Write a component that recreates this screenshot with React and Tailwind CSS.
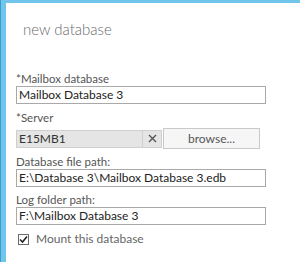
export default function App() {
  const font = { fontFamily: 'Lato, "Open Sans", sans-serif' };

  return (
    <div className="w-[300px] h-[262px] bg-[#3d9bd0] pl-px overflow-hidden" style={font}>
      <div className="h-full bg-white border-l-[5px] border-t-[3px] border-[#6fc6ea]">
        <div className="pl-[17px] pt-[16px] h-[40px] text-[15px] leading-[20px] font-light text-[#6b6b6b]">
          new database
        </div>

        <div className="pl-[10px] pt-[29px] w-[260px]">
          <Field label="*Mailbox database" value="Mailbox Database 3" />

          <div className="mt-[7px] h-[14px] text-[11.5px] leading-[14px] text-[#555]">*Server</div>
          <div className="mt-[3px] flex items-center h-[21px]">
            <div className="flex items-center w-[146px] h-[18px] bg-[#e5e5e5] border border-[#cfcfcf]">
              <div className="flex-1 pl-[2px] text-[12px] leading-[16px] text-[#333]">E15MB1</div>
              <div className="w-[19px] h-full border-l border-[#cfcfcf] flex items-center justify-center">
                <svg width="9" height="9" viewBox="0 0 9 9">
                  <path d="M1 1 L8 8 M8 1 L1 8" stroke="#555" strokeWidth="1.4" />
                </svg>
              </div>
            </div>
            <button className="ml-[1px] w-[97px] h-[21px] bg-[#f6f6f6] border border-[#c9c9c9] text-[12px] leading-[18px] text-[#555]">
              browse...
            </button>
          </div>

          <div className="mt-[6px]">
            <Field label="Database file path:" value="E:\Database 3\Mailbox Database 3.edb" />
          </div>
          <div className="mt-[6px]">
            <Field label="Log folder path:" value="F:\Mailbox Database 3" />
          </div>

          <div className="mt-[7px] ml-[2px] flex items-center gap-[7px]">
            <div className="w-[11px] h-[11px] border border-[#6a6a6a] bg-white flex items-center justify-center">
              <svg width="9" height="9" viewBox="0 0 9 9">
                <path d="M1 4.5 L3.5 7 L8 1.5" stroke="#222" strokeWidth="1.6" fill="none" />
              </svg>
            </div>
            <span className="text-[12px] leading-[14px] text-[#666]">Mount this database</span>
          </div>
        </div>
      </div>
    </div>
  );
}

function Field({ label, value }) {
  return (
    <div>
      <div className="h-[14px] text-[11.5px] leading-[14px] text-[#555]">{label}</div>
      <div className="w-[250px] h-[18px] border border-[#a9a9a9] bg-white pl-[2px] text-[12px] leading-[16px] text-[#222] whitespace-nowrap overflow-hidden">
        {value}
      </div>
    </div>
  );
}
